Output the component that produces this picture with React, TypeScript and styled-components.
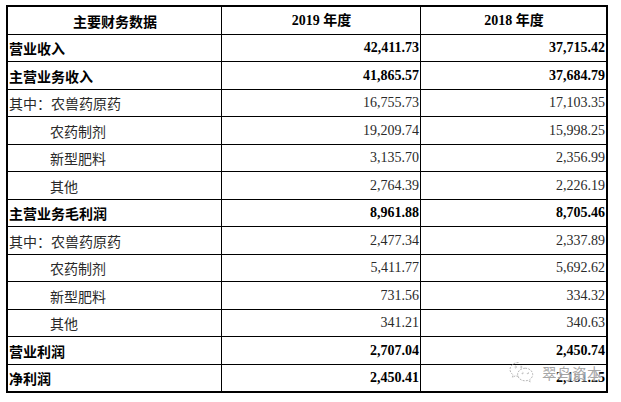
import React from "react";
import styled, { createGlobalStyle } from "styled-components";

const Global = createGlobalStyle`
  html, body { margin: 0; padding: 0; background: #fff; }
  body { width: 621px; height: 402px; overflow: hidden; }
`;

const Page = styled.div`
  position: relative;
  width: 621px;
  height: 402px;
  padding: 5px 0 0 6px;
  box-sizing: border-box;
`;

const Grid = styled.div`
  display: grid;
  grid-template-columns: 213px 198px 185px;
  grid-template-rows: repeat(7, 27px 26px);
  gap: 1px;
  width: fit-content;
  background: #000;
  border: 2px solid #000;
`;

const Cell = styled.div<{ $align?: "left" | "right" | "center"; $bold?: boolean; $indent?: boolean }>`
  background: #fff;
  display: flex;
  align-items: center;
  justify-content: ${(p) => (p.$align === "right" ? "flex-end" : p.$align === "center" ? "center" : "flex-start")};
  padding: 0 ${(p) => (p.$align === "right" ? "1px" : "0")} 0 ${(p) => (p.$indent ? "42px" : "1px")};
  font-size: 14px;
  line-height: 1;
  white-space: nowrap;
  color: ${(p) => (p.$bold ? "#000" : "#2a2a2a")};
  font-weight: ${(p) => (p.$bold ? 700 : 400)};
`;

const Label = styled(Cell)`
  font-family: "Noto Sans CJK SC", sans-serif;
`;

const Num = styled(Cell)`
  font-family: "Liberation Serif", "Noto Sans CJK SC", serif;
  font-size: 14px;
`;

const Watermark = styled.div`
  position: absolute;
  left: 509px;
  top: 361px;
  display: flex;
  align-items: center;
  gap: 8px;
  pointer-events: none;
`;

const WmText = styled.span`
  font-family: "Noto Sans CJK SC", sans-serif;
  font-size: 14.5px;
  color: rgba(150, 150, 150, 0.85);
  letter-spacing: 0.5px;
  text-shadow: 0 0 2px #fff, 0 0 2px #fff, 0 0 3px #fff;
`;

type Row = { label: string; a: string; b: string; kind: "bold" | "sub" | "indent" };

const rows: Row[] = [
  { label: "营业收入", a: "42,411.73", b: "37,715.42", kind: "bold" },
  { label: "主营业务收入", a: "41,865.57", b: "37,684.79", kind: "bold" },
  { label: "其中：农兽药原药", a: "16,755.73", b: "17,103.35", kind: "sub" },
  { label: "农药制剂", a: "19,209.74", b: "15,998.25", kind: "indent" },
  { label: "新型肥料", a: "3,135.70", b: "2,356.99", kind: "indent" },
  { label: "其他", a: "2,764.39", b: "2,226.19", kind: "indent" },
  { label: "主营业务毛利润", a: "8,961.88", b: "8,705.46", kind: "bold" },
  { label: "其中：农兽药原药", a: "2,477.34", b: "2,337.89", kind: "sub" },
  { label: "农药制剂", a: "5,411.77", b: "5,692.62", kind: "indent" },
  { label: "新型肥料", a: "731.56", b: "334.32", kind: "indent" },
  { label: "其他", a: "341.21", b: "340.63", kind: "indent" },
  { label: "营业利润", a: "2,707.04", b: "2,450.74", kind: "bold" },
  { label: "净利润", a: "2,450.41", b: "2,181.25", kind: "bold" },
];

const WeChatIcon = () => (
  <svg width="25" height="23" viewBox="0 0 25 23" fill="none" stroke="#b8b8b8" strokeWidth="1" strokeDasharray="2 1.2">
    <path d="M9.5 1.5C4.8 1.5 1 4.6 1 8.4c0 2.2 1.2 4.1 3.1 5.4L3.4 16.4l3-1.6c1 .3 2 .5 3.1.5" />
    <path d="M16.2 7.2c-4.2 0-7.6 2.8-7.6 6.3s3.4 6.3 7.6 6.3c.9 0 1.8-.1 2.6-.4l2.6 1.5-.7-2.3c1.8-1.2 3-3 3-5.1 0-3.5-3.4-6.3-7.5-6.3z" />
    <circle cx="6.5" cy="6" r="0.9" />
    <circle cx="12" cy="6" r="0.9" />
    <circle cx="13.5" cy="12" r="0.7" />
    <circle cx="18.8" cy="12" r="0.7" />
  </svg>
);

export default function App() {
  return (
    <>
      <Global />
      <Page>
        <Grid>
          <Label $align="center" $bold>主要财务数据</Label>
          <Num $align="center" $bold>2019 年度</Num>
          <Num $align="center" $bold>2018 年度</Num>
          {rows.map((r, i) => {
            const bold = r.kind === "bold";
            return (
              <React.Fragment key={i}>
                <Label $bold={bold} $indent={r.kind === "indent"}>{r.label}</Label>
                <Num $align="right" $bold={bold}>{r.a}</Num>
                <Num $align="right" $bold={bold}>{r.b}</Num>
              </React.Fragment>
            );
          })}
        </Grid>
        <Watermark>
          <WeChatIcon />
          <WmText>翠鸟资本</WmText>
        </Watermark>
      </Page>
    </>
  );
}
